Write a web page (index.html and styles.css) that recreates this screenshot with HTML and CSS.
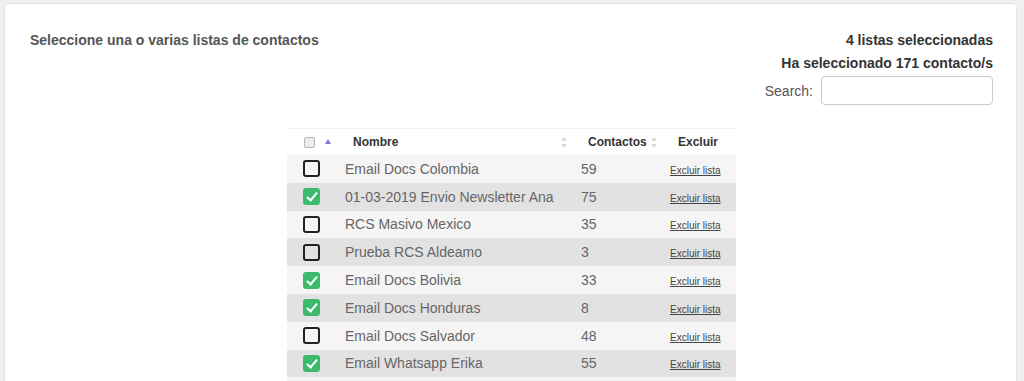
FILE: index.html
```html
<!DOCTYPE html>
<html lang="es">
<head>
<meta charset="utf-8">
<title>Listas de contactos</title>
<link rel="stylesheet" href="styles.css">
</head>
<body>
<div class="card">
  <div class="top">
    <div class="title">Seleccione una o varias listas de contactos</div>
    <div class="summary">
      <div class="sum-line">4 listas seleccionadas</div>
      <div class="sum-line last">Ha seleccionado 171 contacto/s</div>
      <label class="search">Search: <input type="text" class="search-input"></label>
    </div>
  </div>
  <table class="lists">
    <colgroup>
      <col class="c1"><col class="c2"><col class="c3"><col class="c4">
    </colgroup>
    <thead>
      <tr>
        <th class="th-check"><span class="hbox"></span><span class="asc"></span></th>
        <th class="th-name">Nombre<span class="both"></span></th>
        <th class="th-num">Contactos<span class="both"></span></th>
        <th class="th-ex">Excluir</th>
      </tr>
    </thead>
    <tbody>
      <tr><td class="td-check"><span class="box"></span></td><td>Email Docs Colombia</td><td>59</td><td class="td-ex"><a href="#">Excluir lista</a></td></tr>
      <tr><td class="td-check"><span class="box on"></span></td><td>01-03-2019 Envio Newsletter Ana</td><td>75</td><td class="td-ex"><a href="#">Excluir lista</a></td></tr>
      <tr><td class="td-check"><span class="box"></span></td><td>RCS Masivo Mexico</td><td>35</td><td class="td-ex"><a href="#">Excluir lista</a></td></tr>
      <tr><td class="td-check"><span class="box"></span></td><td>Prueba RCS Aldeamo</td><td>3</td><td class="td-ex"><a href="#">Excluir lista</a></td></tr>
      <tr><td class="td-check"><span class="box on"></span></td><td>Email Docs Bolivia</td><td>33</td><td class="td-ex"><a href="#">Excluir lista</a></td></tr>
      <tr><td class="td-check"><span class="box on"></span></td><td>Email Docs Honduras</td><td>8</td><td class="td-ex"><a href="#">Excluir lista</a></td></tr>
      <tr><td class="td-check"><span class="box"></span></td><td>Email Docs Salvador</td><td>48</td><td class="td-ex"><a href="#">Excluir lista</a></td></tr>
      <tr><td class="td-check"><span class="box on"></span></td><td>Email Whatsapp Erika</td><td>55</td><td class="td-ex"><a href="#">Excluir lista</a></td></tr>
      <tr class="tail"><td class="td-check"></td><td></td><td></td><td></td></tr>
    </tbody>
  </table>
</div>
</body>
</html>
```
FILE: styles.css
```css
html, body {
  margin: 0;
  padding: 0;
}
body {
  background: #eef0f1;
  font-family: "Liberation Sans", Arial, sans-serif;
  color: #555;
  padding: 3px 7px 0 4px;
  overflow: hidden;
}
.card {
  background: #fff;
  border: 1px solid #e0e4e6;
  border-radius: 4px;
  padding: 27px 23px 40px 25px;
  min-height: 400px;
}
.top {
  display: flex;
  justify-content: space-between;
  align-items: flex-start;
}
.title {
  font-size: 14px;
  font-weight: bold;
  color: #555;
  line-height: 18px;
}
.summary {
  display: flex;
  flex-direction: column;
  align-items: flex-end;
}
.sum-line {
  font-size: 14px;
  font-weight: bold;
  color: #333;
  line-height: 18px;
  margin-bottom: 5px;
}
.sum-line.last { margin-bottom: 4px; }
.search {
  display: flex;
  align-items: center;
  gap: 8px;
  font-size: 14px;
  color: #555;
}
.search-input {
  width: 170px;
  height: 27px;
  box-sizing: content-box;
  padding: 0;
  border: 1px solid #ccc;
  border-radius: 4px;
  margin: 0;
}
.lists {
  margin: 23px auto 0;
  width: 449px;
  table-layout: fixed;
  border-collapse: collapse;
  border-top: 1px solid #f0f0f0;
}
.c1 { width: 50px; }
.c2 { width: 236px; }
.c3 { width: 90px; }
.c4 { width: 73px; }
.lists th {
  height: 26px;
  padding: 0;
  font-size: 12px;
  font-weight: bold;
  color: #333;
  text-align: left;
  background: #fff;
  position: relative;
}
.th-name { padding-left: 16px !important; }
.th-num { padding-left: 15px !important; }
.th-ex { padding-left: 15px !important; }
.hbox {
  display: inline-block;
  width: 11px;
  height: 11px;
  box-sizing: border-box;
  border: 1px solid #b5b5b5;
  border-radius: 2px;
  background: #ececec;
  vertical-align: middle;
  margin-left: 17px;
}
.asc {
  position: absolute;
  left: 38px;
  top: 10px;
  width: 0;
  height: 0;
  border-left: 3px solid transparent;
  border-right: 3px solid transparent;
  border-bottom: 5px solid #7a7ad6;
}
.both {
  position: absolute;
  right: 6px;
  top: 8px;
  width: 6px;
  height: 11px;
}
.both::before, .both::after {
  content: "";
  position: absolute;
  left: 0;
  width: 0;
  height: 0;
  border-left: 3px solid transparent;
  border-right: 3px solid transparent;
}
.both::before { top: 0; border-bottom: 4px solid #d8d8d8; }
.both::after { bottom: 0; border-top: 4px solid #d8d8d8; }
.lists tbody tr { height: 27.8px; }
.lists tbody tr:nth-child(odd) { background: #f5f5f5; }
.lists tbody tr:nth-child(even) { background: #e2e2e2; }
.lists td {
  padding: 0 0 0 8px;
  font-size: 14px;
  color: #666;
  white-space: nowrap;
  overflow: hidden;
}
.lists td.td-check { padding-left: 16px; }
.box {
  display: block;
  width: 17px;
  height: 17px;
  box-sizing: border-box;
  border: 2px solid #222;
  border-radius: 3px;
}
.box.on {
  border: none;
  background: #3dba6c;
  position: relative;
}
.box.on::after {
  content: "";
  position: absolute;
  left: 6px;
  top: 2px;
  width: 4px;
  height: 9px;
  border-right: 2px solid #fff;
  border-bottom: 2px solid #fff;
  transform: rotate(40deg);
}
.td-ex { padding-left: 7px !important; }
.td-ex a {
  font-size: 10px;
  color: #444;
  text-decoration: underline;
}
```
